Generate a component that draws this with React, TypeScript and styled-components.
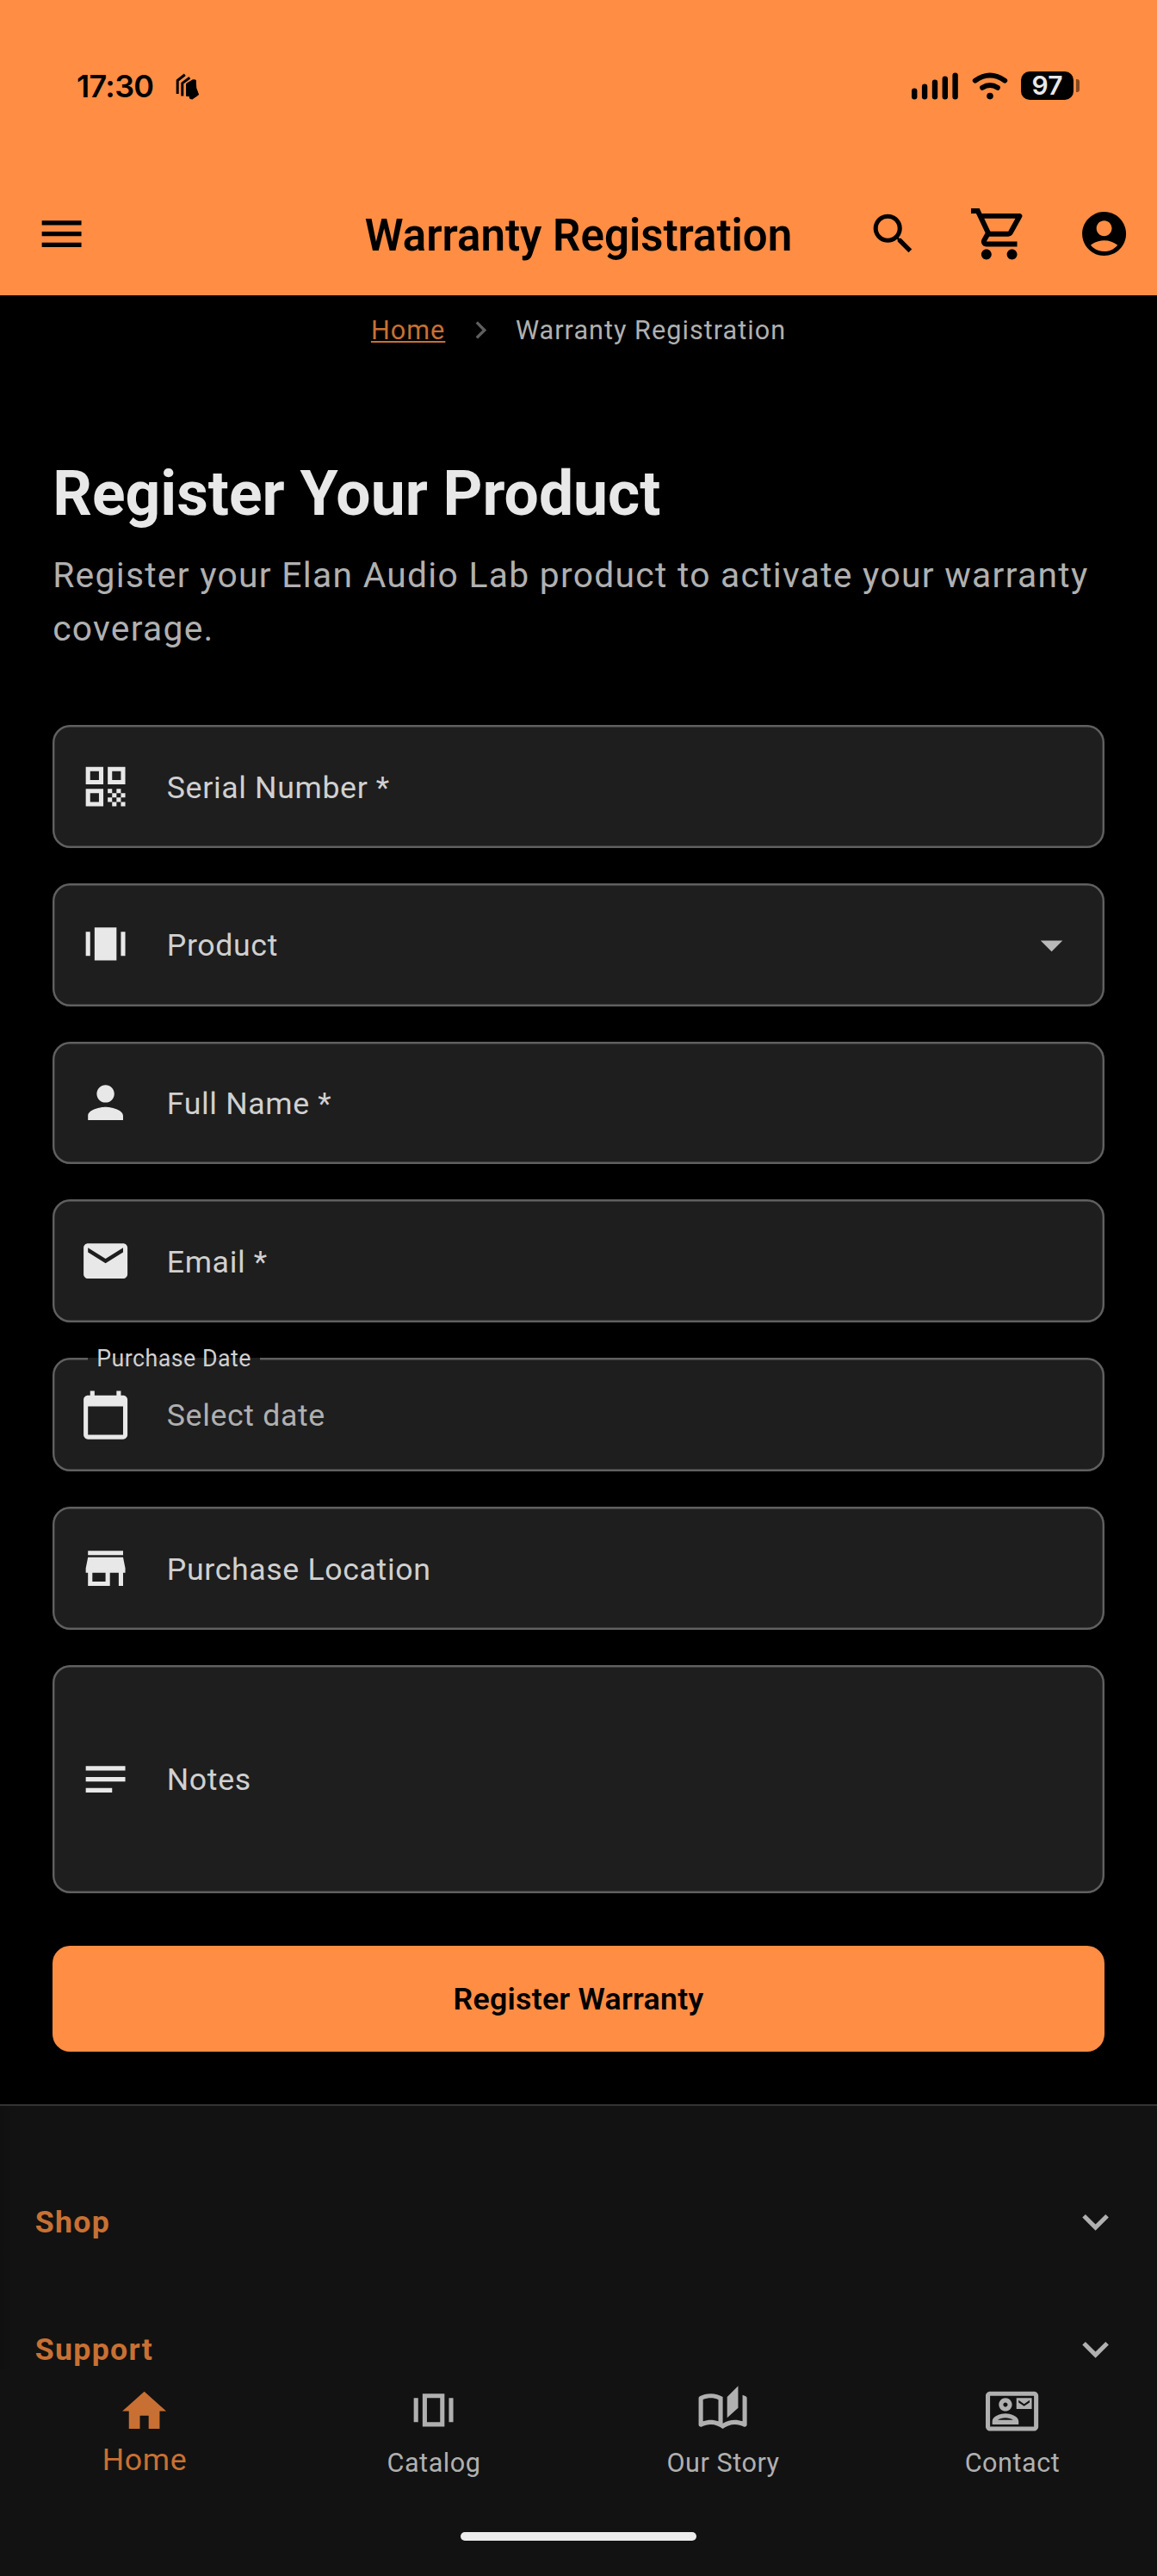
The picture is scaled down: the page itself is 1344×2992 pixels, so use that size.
import React from "react";
import styled, { createGlobalStyle } from "styled-components";

const GlobalStyle = createGlobalStyle`
  * { box-sizing: border-box; }
  html, body { margin: 0; padding: 0; background: #000; }
  body { font-family: Roboto, "Liberation Sans", sans-serif; }
`;

const colors = {
  accent: "#ff8d44",
  accentMuted: "#c87033",
  bg: "#000000",
  surface: "#121212",
  field: "#1e1e1e",
  outline: "#606060",
  text: "#e8e8e8",
  label: "#d0d0d0",
  muted: "#b0b0b0",
};

/* ---------- icons ---------- */

const Glyph = styled.svg<{ $size?: number }>`
  display: block;
  flex: none;
  width: ${(p) => p.$size ?? 61.2}px;
  height: ${(p) => p.$size ?? 61.2}px;
  fill: currentColor;
`;

const paths = {
  menu: "M3 18h18v-2H3v2zm0-5h18v-2H3v2zm0-7v2h18V6H3z",
  search:
    "M15.5 14h-.79l-.28-.27C15.41 12.59 16 11.11 16 9.5 16 5.91 13.09 3 9.5 3S3 5.91 3 9.5 5.91 16 9.5 16c1.61 0 3.09-.59 4.23-1.57l.27.28v.79l5 4.99L20.49 19l-4.99-5zm-6 0C7.01 14 5 11.99 5 9.5S7.01 5 9.5 5 14 7.01 14 9.5 11.99 14 9.5 14z",
  cart: "M15.55 13c.75 0 1.41-.41 1.75-1.03l3.58-6.49c.37-.66-.11-1.48-.87-1.48H5.21l-.94-2H1v2h2l3.6 7.59-1.35 2.44C4.52 15.37 5.48 17 7 17h12v-2H7l1.1-2h7.45zM6.16 6h12.15l-2.76 5H8.53L6.16 6zM7 18c-1.1 0-1.99.9-1.99 2S5.9 22 7 22s2-.9 2-2-.9-2-2-2zm10 0c-1.1 0-1.99.9-1.99 2s.89 2 1.99 2 2-.9 2-2-.9-2-2-2z",
  account:
    "M12 2C6.48 2 2 6.48 2 12s4.48 10 10 10 10-4.48 10-10S17.52 2 12 2zm0 4c1.93 0 3.5 1.57 3.5 3.5S13.93 13 12 13s-3.5-1.57-3.5-3.5S10.07 6 12 6zm0 14c-2.03 0-4.43-.82-6.14-2.88C7.55 15.8 9.68 15 12 15s4.45.8 6.14 2.12C16.43 19.18 14.03 20 12 20z",
  chevronRight: "M10 6L8.59 7.41 13.17 12l-4.58 4.59L10 18l6-6z",
  expandMore: "M16.59 8.59L12 13.17 7.41 8.59 6 10l6 6 6-6z",
  dropDown: "M7 10l5 5 5-5z",
  qr: "M3 11h8V3H3v8zm2-6h4v4H5V5zM3 21h8v-8H3v8zm2-6h4v4H5v-4zM13 3v8h8V3h-8zm6 6h-4V5h4v4zM19 19h2v2h-2zM13 13h2v2h-2zM15 15h2v2h-2zM13 17h2v2h-2zM15 19h2v2h-2zM17 17h2v2h-2zM17 13h2v2h-2zM19 15h2v2h-2z",
  stories: "M7 4h10v15H7zM3 6h2v11H3zM19 6h2v11h-2z",
  storiesOutlined: "M7 19h10V4H7v15zM9 6h6v11H9V6zM3 6h2v11H3zM19 6h2v11h-2z",
  person:
    "M12 12c2.21 0 4-1.79 4-4s-1.79-4-4-4-4 1.79-4 4 1.79 4 4 4zm0 2c-2.67 0-8 1.34-8 4v2h16v-2c0-2.66-5.33-4-8-4z",
  email:
    "M20 4H4c-1.1 0-1.99.9-1.99 2L2 18c0 1.1.9 2 2 2h16c1.1 0 2-.9 2-2V6c0-1.1-.9-2-2-2zm0 4l-8 5-8-5V6l8 5 8-5v2z",
  calendar:
    "M20 3h-1V1h-2v2H7V1H5v2H4c-1.1 0-2 .9-2 2v16c0 1.1.9 2 2 2h16c1.1 0 2-.9 2-2V5c0-1.1-.9-2-2-2zm0 18H4V8h16v13z",
  store: "M20 4H4v2h16V4zm1 10v-2l-1-5H4l-1 5v2h1v6h10v-6h4v6h2v-6h1zm-9 4H6v-4h6v4z",
  notes: "M21 11.01L3 11v2h18zM3 16h12v2H3zM21 6H3v2.01L21 8z",
  home: "M10 20v-6h4v6h5v-8h3L12 3 2 12h3v8z",
  book: "M22.47 5.2c-.47-.24-.96-.44-1.47-.61v12.03c-1.14-.41-2.31-.62-3.5-.62-1.9 0-3.78.54-5.5 1.58V5.48C10.38 4.55 8.51 4 6.5 4c-1.79 0-3.48.44-4.97 1.2-.33.16-.53.51-.53.88v12.08c0 .58.47.99 1 .99.16 0 .32-.04.48-.12C3.69 18.4 5.05 18 6.5 18c2.07 0 3.98.82 5.5 2 1.52-1.18 3.43-2 5.5-2 1.45 0 2.81.4 4.02 1.04.16.08.32.12.48.12.52 0 1-.41 1-.99V6.08c0-.37-.2-.72-.53-.88zM10 16.62C8.86 16.21 7.69 16 6.5 16s-2.36.21-3.5.62V6.71C4.11 6.24 5.28 6 6.5 6c1.2 0 2.39.25 3.5.72v9.9zM19 .5l-5 5V15l5-4.5V.5z",
  contact:
    "M22 3H2C.9 3 0 3.9 0 5v14c0 1.1.9 2 2 2h20c1.1 0 1.99-.9 1.99-2L24 5c0-1.1-.9-2-2-2zm0 16H2V5h20v14zM21 6h-7v5h7V6zm-1 2l-2.5 1.75L15 8V7l2.5 1.75L20 7v1zM9 12c1.65 0 3-1.35 3-3s-1.35-3-3-3-3 1.35-3 3 1.35 3 3 3zm0-4c.55 0 1 .45 1 1s-.45 1-1 1-1-.45-1-1 .45-1 1-1zm6 8.59c0-2.5-3.97-3.58-6-3.58s-6 1.08-6 3.58V18h12v-1.41zM5.48 16c.74-.5 2.22-1 3.52-1s2.77.49 3.52 1H5.48z",
};

type IconName = keyof typeof paths;

const Icon = ({ name, size }: { name: IconName; size?: number }) => (
  <Glyph viewBox="0 0 24 24" $size={size} aria-hidden="true">
    <path d={paths[name]} />
  </Glyph>
);

/* ---------- screen ---------- */

const Screen = styled.div`
  display: flex;
  flex-direction: column;
  width: 1344px;
  height: 2992px;
  overflow: hidden;
  background: ${colors.bg};
  color: ${colors.text};
`;

const Header = styled.header`
  flex: none;
  height: 342.7px;
  background: ${colors.accent};
  color: #000;
`;

const StatusBar = styled.div`
  display: flex;
  align-items: center;
  justify-content: space-between;
  height: 199.9px;
  padding: 0 90px 0 89px;
`;

const StatusGroup = styled.div`
  display: flex;
  align-items: center;
`;

const Clock = styled.span`
  width: 115px;
  padding-top: 1px;
  font-family: Inter, sans-serif;
  font-weight: 600;
  font-size: 36px;
  line-height: 40px;
  letter-spacing: -0.7px;
`;

const StatusArt = styled.svg<{ $w: number; $h: number; $gap?: number }>`
  display: block;
  width: ${(p) => p.$w}px;
  height: ${(p) => p.$h}px;
  margin-left: ${(p) => p.$gap ?? 0}px;
`;

const Battery = styled.div`
  display: flex;
  align-items: center;
  justify-content: center;
  width: 61px;
  height: 33px;
  margin-left: 15.5px;
  border-radius: 10px;
  background: #000;
  color: #e8e8e8;
  font-family: Inter, sans-serif;
  font-weight: 600;
  font-size: 30px;
  line-height: 33px;
`;

const BatteryNub = styled.span`
  width: 4px;
  height: 15px;
  margin-left: 3px;
  border-radius: 0 3px 3px 0;
  background: #85491f;
`;

const AppBar = styled.div`
  display: grid;
  grid-template-columns: 1fr auto 1fr;
  align-items: center;
  height: 142.8px;
`;

const MenuSlot = styled.div`
  display: flex;
  justify-content: center;
  width: 142.8px;
`;

const Title = styled.h1`
  margin: 0;
  padding-top: 5px;
  font-weight: 600;
  font-size: 51px;
  line-height: 60px;
`;

const Actions = styled.div`
  display: flex;
  justify-content: flex-end;
`;

const ActionSlot = styled.div`
  display: flex;
  flex: none;
  align-items: center;
  justify-content: center;
  width: 122.4px;
  height: 122.4px;
`;

/* ---------- content ---------- */

const Content = styled.main`
  flex: 1;
  min-height: 0;
  overflow: hidden;
`;

const Breadcrumb = styled.nav`
  display: flex;
  align-items: center;
  justify-content: center;
  gap: 20.4px;
  height: 81.6px;
  font-size: 30.6px;
  letter-spacing: 1.02px;
  line-height: 40px;
  color: #5f5f5f;
`;

const CrumbLink = styled.a`
  padding-top: 2px;
  color: ${colors.accentMuted};
  text-decoration: underline;
  text-decoration-thickness: 1.5px;
  text-underline-offset: 2px;
  text-decoration-skip-ink: none;
`;

const CrumbCurrent = styled.span`
  padding-top: 2px;
  color: ${colors.muted};
`;

const Section = styled.section`
  padding: 104px 61.2px 61.2px;
`;

const Heading = styled.h2`
  margin: 0;
  font-weight: 700;
  font-size: 71.4px;
  line-height: 91.8px;
`;

const Lead = styled.p`
  margin: 18.4px 0 0;
  color: ${colors.muted};
  font-size: 40.8px;
  letter-spacing: 1.275px;
  line-height: 61.2px;
`;

const Form = styled.form`
  display: flex;
  flex-direction: column;
  gap: 40.8px;
  margin-top: 81.6px;
`;

const Field = styled.div<{ $height?: number }>`
  position: relative;
  display: flex;
  align-items: center;
  height: ${(p) => p.$height ?? 142.8}px;
  border-radius: 20.4px;
  background: ${colors.field};
  box-shadow: inset 0 0 0 2.4px ${colors.outline};
`;

const FieldIcon = styled.span`
  display: flex;
  flex: none;
  justify-content: center;
  width: 122.4px;
  margin-right: 10.2px;
  color: ${colors.text};
`;

const FieldText = styled.span<{ $placeholder?: boolean }>`
  flex: 1;
  padding-top: 2px;
  color: ${(p) => (p.$placeholder ? colors.muted : colors.label)};
  font-size: 35.7px;
  letter-spacing: 0.6375px;
  line-height: 42px;
`;

const FieldTrailing = styled.span`
  display: flex;
  margin-right: 30.6px;
  color: #b9b9b9;
`;

const FloatingLabel = styled.span`
  position: absolute;
  left: 40.8px;
  top: -16px;
  padding: 0 10.2px;
  color: ${colors.label};
  font-size: 26.775px;
  letter-spacing: 0.48px;
  line-height: 34px;
  background: linear-gradient(transparent 16px, ${colors.field} 16px);
`;

const SubmitButton = styled.button`
  height: 122.4px;
  margin: 20.4px 0 0;
  padding: 2px 0 0;
  border: 0;
  border-radius: 20.4px;
  background: ${colors.accent};
  color: #000;
  font-family: inherit;
  font-weight: 600;
  font-size: 35.7px;
  letter-spacing: 0.255px;
`;

const Footer = styled.footer`
  height: 400px;
  padding: 61.2px 40.8px 0;
  border-top: 2.55px solid #333;
  background: linear-gradient(to right, #101010, ${colors.surface} 16px);
`;

const FooterRow = styled.div`
  display: flex;
  align-items: center;
  justify-content: space-between;
  height: 147.9px;
  color: ${colors.muted};
`;

const FooterTitle = styled.span`
  color: ${colors.accentMuted};
  font-weight: 700;
  font-size: 35.7px;
  letter-spacing: 1.275px;
  line-height: 42px;
`;

/* ---------- bottom navigation ---------- */

const BottomNav = styled.nav`
  display: grid;
  grid-template-columns: repeat(4, 1fr);
  grid-template-rows: 1fr auto;
  flex: none;
  height: 240px;
  padding-top: 18.2px;
  background: ${colors.surface};
`;

const Tab = styled.a<{ $active?: boolean }>`
  display: flex;
  flex-direction: column;
  align-items: center;
  color: ${(p) => (p.$active ? colors.accentMuted : colors.muted)};
  font-size: ${(p) => (p.$active ? 35.7 : 30.6)}px;
  line-height: ${(p) => (p.$active ? 53 : 59.4)}px;
  letter-spacing: ${(p) => (p.$active ? 0.64 : 0.54)}px;
`;

const HomeIndicator = styled.div`
  grid-column: 1 / -1;
  justify-self: center;
  width: 274px;
  height: 10px;
  margin-bottom: 41px;
  border-radius: 5px;
  background: #ececec;
`;

type FieldSpec = {
  icon: IconName;
  text: string;
  height?: number;
  floating?: string;
  select?: boolean;
};

const fields: FieldSpec[] = [
  { icon: "qr", text: "Serial Number *" },
  { icon: "stories", text: "Product", select: true },
  { icon: "person", text: "Full Name *" },
  { icon: "email", text: "Email *" },
  { icon: "calendar", text: "Select date", height: 132.6, floating: "Purchase Date" },
  { icon: "store", text: "Purchase Location" },
  { icon: "notes", text: "Notes", height: 265.2 },
];

const tabs: { icon: IconName; text: string; active?: boolean }[] = [
  { icon: "home", text: "Home", active: true },
  { icon: "storiesOutlined", text: "Catalog" },
  { icon: "book", text: "Our Story" },
  { icon: "contact", text: "Contact" },
];

export default function App() {
  return (
    <>
      <GlobalStyle />
      <Screen>
        <Header>
          <StatusBar>
            <StatusGroup>
              <Clock>17:30</Clock>
              <StatusArt $w={28} $h={32} viewBox="0 0 28 32">
                <g fill="none" stroke="#000" strokeWidth="3" strokeLinejoin="round">
                  <path d="M2.2 25V9.5l8.6-6.8" />
                  <path d="M7.8 27.6V12.6l8.6-6.4" />
                </g>
                <path
                  d="M12.6 27.5V13.2l7.4-4.4 3.2.2.6 9.2 2.8 7.8-7.2 5-2.6-.5-1-3z"
                  stroke="#000"
                  strokeWidth="1"
                  strokeLinejoin="round"
                />
              </StatusArt>
            </StatusGroup>
            <StatusGroup>
              <StatusArt $w={54} $h={32} viewBox="0 0 54 32">
                <rect x="0" y="18.5" width="6.4" height="13" rx="3.2" />
                <rect x="11.9" y="13.5" width="6.4" height="18" rx="3.2" />
                <rect x="23.8" y="8.5" width="6.4" height="23" rx="3.2" />
                <rect x="35.6" y="4.5" width="6.4" height="27" rx="3.2" />
                <rect x="47.4" y="0.5" width="6.4" height="31" rx="3.2" />
              </StatusArt>
              <StatusArt $w={42} $h={32} $gap={16} viewBox="0 0 42 32">
                <g fill="none" stroke="#000" strokeWidth="6" strokeLinecap="round">
                  <path d="M3.8 9.6Q21 -2.6 38.2 9.6" />
                  <path d="M12.2 17.8Q21 12.2 29.8 17.8" />
                </g>
                <circle cx="21" cy="27.6" r="3.8" />
              </StatusArt>
              <Battery>97</Battery>
              <BatteryNub />
            </StatusGroup>
          </StatusBar>
          <AppBar>
            <MenuSlot>
              <Icon name="menu" />
            </MenuSlot>
            <Title>Warranty Registration</Title>
            <Actions>
              <ActionSlot>
                <Icon name="search" />
              </ActionSlot>
              <ActionSlot>
                <Icon name="cart" size={71.4} />
              </ActionSlot>
              <ActionSlot>
                <Icon name="account" />
              </ActionSlot>
            </Actions>
          </AppBar>
        </Header>

        <Content>
          <Breadcrumb>
            <CrumbLink>Home</CrumbLink>
            <Icon name="chevronRight" size={40.8} />
            <CrumbCurrent>Warranty Registration</CrumbCurrent>
          </Breadcrumb>
          <Section>
            <Heading>Register Your Product</Heading>
            <Lead>Register your Elan Audio Lab product to activate your warranty coverage.</Lead>
            <Form>
              {fields.map((f) => (
                <Field key={f.text} $height={f.height}>
                  {f.floating && <FloatingLabel>{f.floating}</FloatingLabel>}
                  <FieldIcon>
                    <Icon name={f.icon} />
                  </FieldIcon>
                  <FieldText $placeholder={!!f.floating}>{f.text}</FieldText>
                  {f.select && (
                    <FieldTrailing>
                      <Icon name="dropDown" />
                    </FieldTrailing>
                  )}
                </Field>
              ))}
              <SubmitButton type="button">Register Warranty</SubmitButton>
            </Form>
          </Section>
          <Footer>
            <FooterRow>
              <FooterTitle>Shop</FooterTitle>
              <Icon name="expandMore" />
            </FooterRow>
            <FooterRow>
              <FooterTitle>Support</FooterTitle>
              <Icon name="expandMore" />
            </FooterRow>
          </Footer>
        </Content>

        <BottomNav>
          {tabs.map((t) => (
            <Tab key={t.text} $active={t.active}>
              <Icon name={t.icon} />
              {t.text}
            </Tab>
          ))}
          <HomeIndicator />
        </BottomNav>
      </Screen>
    </>
  );
}
